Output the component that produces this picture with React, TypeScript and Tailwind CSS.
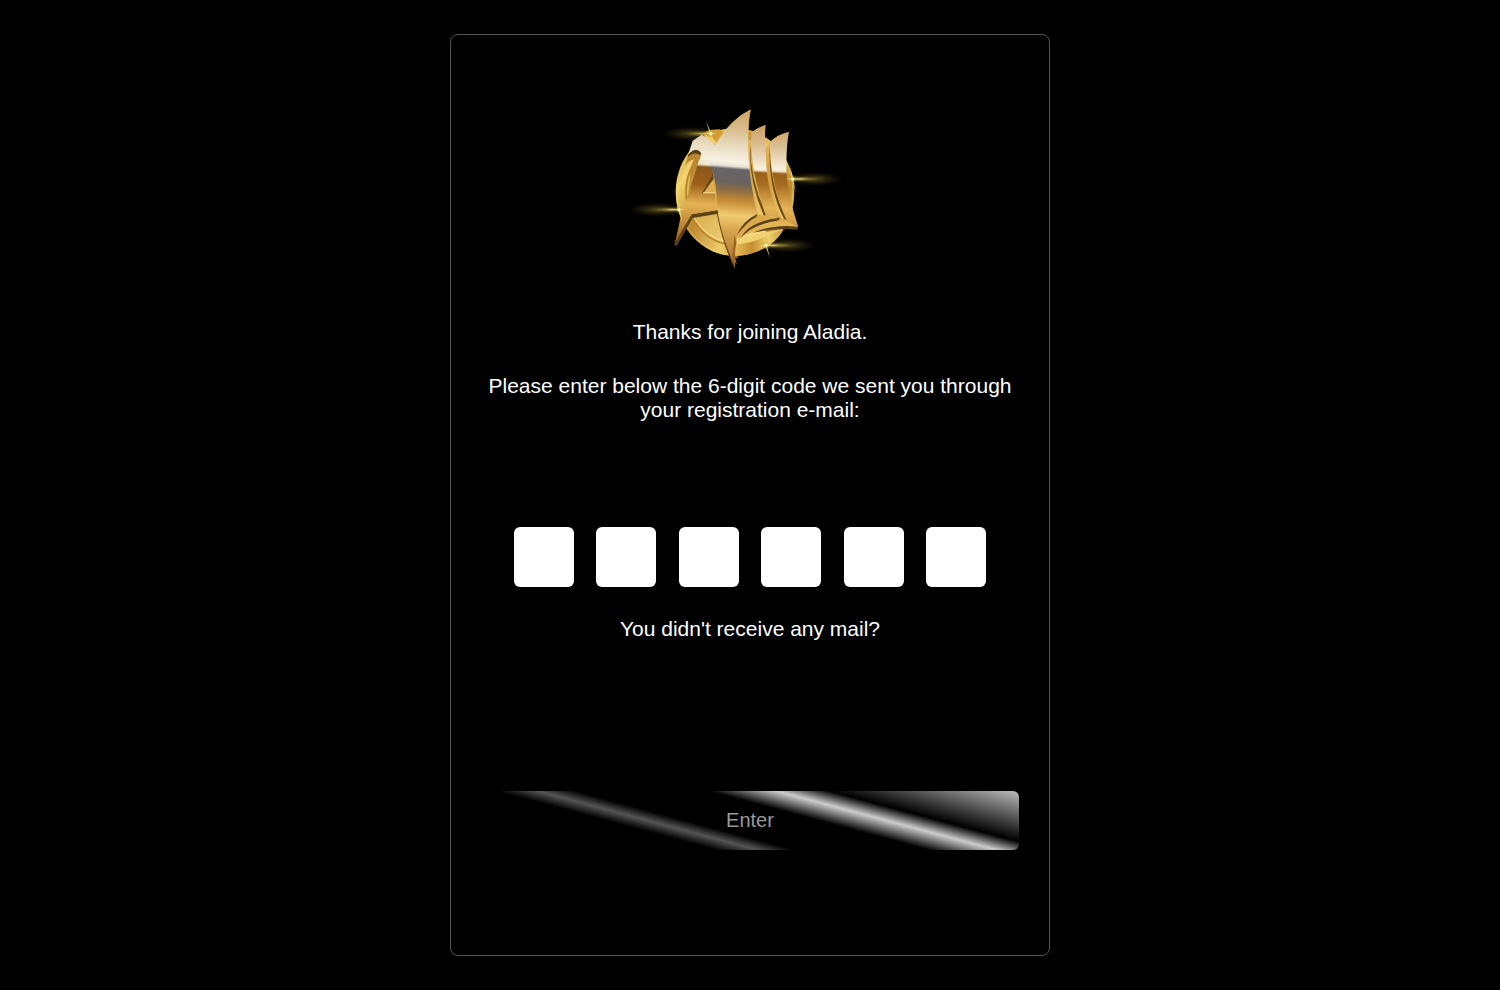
import React from "react";

function Flare({ x, y, left, right }: { x: number; y: number; left: number; right: number }) {
  return (
    <g>
      <ellipse cx={x + (right - left) / 2} cy={y} rx={(left + right) / 2} ry="22" fill="url(#glow)" />
      <ellipse cx={x + (right - left) / 6} cy={y} rx={(left + right) / 3.5} ry="9" fill="url(#glowCore)" />
    </g>
  );
}

function Spark({ x, y, lean }: { x: number; y: number; lean: number }) {
  return (
    <g transform={`translate(${x} ${y})`}>
      <path d="M-2.5 0L0 -40L2.5 0L0 40Z" fill="#efdc4a" opacity="0.9" transform={`rotate(${lean})`} />
      <path d="M-20 0L0 -2L20 0L0 2Z" fill="#fff2a8" />
      <circle r="14" fill="url(#glowCore)" />
      <circle r="3.8" fill="#fffdf0" />
    </g>
  );
}

function Logo() {
  return (
    <svg className="block h-[180px] w-[230px]" viewBox="0 0 690 540" role="img" aria-label="Aladia">
      <defs>
        <linearGradient id="metal" gradientUnits="userSpaceOnUse" x1="379" y1="30" x2="341" y2="505">
          <stop offset="0" stopColor="#d1a665" />
          <stop offset="0.12" stopColor="#d8bb8b" />
          <stop offset="0.22" stopColor="#e6d8bb" />
          <stop offset="0.33" stopColor="#f7f2e3" />
          <stop offset="0.36" stopColor="#e6e1d5" />
          <stop offset="0.378" stopColor="#666468" />
          <stop offset="0.46" stopColor="#69635f" />
          <stop offset="0.51" stopColor="#906d42" />
          <stop offset="0.575" stopColor="#c38b35" />
          <stop offset="0.67" stopColor="#f2cb70" />
          <stop offset="0.76" stopColor="#d8a54c" />
          <stop offset="0.9" stopColor="#b98236" />
          <stop offset="1" stopColor="#a76b22" />
        </linearGradient>
        <linearGradient id="bronze" gradientUnits="userSpaceOnUse" x1="430" y1="80" x2="412" y2="440">
          <stop offset="0" stopColor="#cca063" />
          <stop offset="0.16" stopColor="#dbc093" />
          <stop offset="0.35" stopColor="#f8f0dc" />
          <stop offset="0.365" stopColor="#eee1c7" />
          <stop offset="0.385" stopColor="#986019" />
          <stop offset="0.48" stopColor="#a86d22" />
          <stop offset="0.67" stopColor="#e5b456" />
          <stop offset="0.78" stopColor="#d5a04a" />
          <stop offset="1" stopColor="#a6732c" />
        </linearGradient>
        <linearGradient id="legGold" gradientUnits="userSpaceOnUse" x1="240" y1="110" x2="220" y2="430">
          <stop offset="0" stopColor="#dbc08e" />
          <stop offset="0.24" stopColor="#f1e2c1" />
          <stop offset="0.26" stopColor="#f1dfbc" />
          <stop offset="0.28" stopColor="#8c571a" />
          <stop offset="0.44" stopColor="#9b5f19" />
          <stop offset="0.63" stopColor="#e5b355" />
          <stop offset="0.8" stopColor="#c38c36" />
          <stop offset="1" stopColor="#9b631e" />
        </linearGradient>
        <linearGradient id="rim" x1="0" y1="0.2" x2="1" y2="0.8">
          <stop offset="0" stopColor="#c28d2f" />
          <stop offset="0.13" stopColor="#f3d56f" />
          <stop offset="0.35" stopColor="#bd872e" />
          <stop offset="0.6" stopColor="#edcb69" />
          <stop offset="0.83" stopColor="#bb862f" />
          <stop offset="1" stopColor="#ffec82" />
        </linearGradient>
        <linearGradient id="face" x1="0" y1="0" x2="0.8" y2="1">
          <stop offset="0" stopColor="#a87b29" />
          <stop offset="0.38" stopColor="#d5a640" />
          <stop offset="0.68" stopColor="#e6c267" />
          <stop offset="1" stopColor="#ffec96" />
        </linearGradient>
        <linearGradient id="edge" x1="0" y1="0" x2="0" y2="1">
          <stop offset="0" stopColor="#e2b45b" />
          <stop offset="0.5" stopColor="#d3a044" />
          <stop offset="1" stopColor="#efcb70" />
        </linearGradient>
        <linearGradient id="lowerRim" x1="0" y1="0" x2="1" y2="0">
          <stop offset="0" stopColor="#e6bd58" />
          <stop offset="0.35" stopColor="#c48e31" />
          <stop offset="0.7" stopColor="#efd06b" />
          <stop offset="1" stopColor="#c9973a" />
        </linearGradient>
        <radialGradient id="glow">
          <stop offset="0" stopColor="#ad963b" stopOpacity="0.55" />
          <stop offset="0.5" stopColor="#766324" stopOpacity="0.28" />
          <stop offset="1" stopColor="#3b300e" stopOpacity="0" />
        </radialGradient>
        <radialGradient id="glowCore">
          <stop offset="0" stopColor="#fff4ad" stopOpacity="0.9" />
          <stop offset="0.45" stopColor="#dcc34f" stopOpacity="0.4" />
          <stop offset="1" stopColor="#92772a" stopOpacity="0" />
        </radialGradient>
      </defs>

      <Flare x={272} y={101} left={150} right={45} />
      <Flare x={518} y={237} left={30} right={155} />
      <Flare x={177} y={329} left={155} right={30} />
      <Flare x={438} y={436} left={40} right={155} />

      <ellipse cx="345" cy="276" rx="178" ry="192" fill="url(#rim)" />
      <ellipse cx="345" cy="276" rx="174" ry="188" fill="none" stroke="#f8df83" strokeWidth="2" opacity="0.65" />
      <ellipse cx="344" cy="276" rx="146" ry="158" fill="url(#face)" stroke="#b6822a" strokeWidth="5" />
      <ellipse cx="345" cy="274" rx="142" ry="154" fill="none" stroke="#ffec9c" strokeWidth="2.5" opacity="0.7" />
      <path d="M246 101L285 134L312 101L300 88Q265 88 246 101Z" fill="#d19c36" />
      <path d="M250 103L285 134L291 128L276 112Z" fill="#f0cc68" />
      <path d="M386 121L438 125L450 129L453 168L430 150L388 135Z" fill="#e7c460" />
      <path d="M439 143L452 161V173L437 156Z" fill="#a87929" />

      <path d="M205 163Q228 137 246 156L238 192Q222 208 213 240Q204 212 222 178Q204 182 195 200Z" fill="#b98733" />
      <path d="M205 164Q228 136 246 156L240 166Q226 154 203 170Z" fill="#584014" />

      <path d="M215 343L292 331L295 341L218 354L170 438L163 434L165 422Z" fill="#5d4119" />
      <path d="M238 178L276 188L289 330L215 343L166 425L182 350Q203 290 238 178Z" fill="url(#legGold)" />
      <path d="M279 225L249 279L286 278Z" fill="#dcae50" />
      <path d="M279 221L246 279L251 278L281 236Z" fill="#684514" />
      <path d="M250 276L286 276V280L250 280Z" fill="#f5d27b" />

      <path d="M386 130L395 116Q388 235 440 346L413 350Q378 246 386 130Z" fill="url(#edge)" />
      <path d="M391 133Q389 241 440 345L432 349Q384 239 391 133Z" fill="#705018" />
      <path d="M394 99Q414 82 437 76Q433 113 437 159L443 212Q448 290 487 354L438 347Q393 224 394 120Z" fill="url(#bronze)" />
      <path d="M438 148L449 125Q449 251 501 362L484 355Q434 264 438 148Z" fill="url(#edge)" />
      <path d="M449 133Q449 263 502 359L495 363Q443 266 449 133Z" fill="#6c4b17" />
      <path d="M450 127Q474 103 507 97Q499 132 499 211Q504 290 535 382L501 363Q451 260 450 127Z" fill="url(#bronze)" />

      <path d="M245 104Q267 113 285 135Q333 57 391 30Q381 80 386 165Q391 250 413 342Q370 371 351 407L346 462L356 474L344 473L345 506Q304 407 291 314Q289 232 270 197L236 195L244 160Q228 137 205 163L218 122Z" fill="url(#metal)" />
      <path d="M245 158Q264 170 272 196L237 193Z" fill="#f6e9cb" opacity="0.7" />
      <path d="M291 329Q307 416 342 493L344 506Q310 441 290 340Z" fill="#654417" />
      <path d="M345 506L342 485L350 492L346 473L356 475L344 458L350 430L344 404L337 470Z" fill="#9a6424" />
      <path d="M285 135Q333 57 391 30Q381 80 386 165Q391 250 413 342" fill="none" stroke="#e9bd65" strokeWidth="2" />
      <path d="M394 99Q414 82 437 76M450 127Q474 103 507 97" fill="none" stroke="#e9bd65" strokeWidth="2" />

      <path d="M351 412Q369 367 413 343L494 357L535 381L493 388L409 392Q368 402 355 422Z" fill="#dba84b" />
      <path d="M350 408Q365 364 413 341L409 350Q377 367 350 408Z" fill="#574018" />
      <path d="M362 413Q388 364 481 353L476 361Q399 374 362 413Z" fill="#594018" />
      <path d="M371 407Q412 363 500 364L535 381L461 381Q405 387 371 407Z" fill="#e4b353" />
      <path d="M397 398Q444 379 501 378L535 380L532 389L493 387Q442 389 397 398Z" fill="#594019" />
      <path d="M353 414Q376 416 411 399L484 390Q461 420 401 431L348 438Z" fill="#f0d273" />
      <path d="M348 433Q407 430 455 399L491 389Q450 460 345 468Z" fill="url(#lowerRim)" />

      <Spark x={272} y={101} lean={-20} />
      <Spark x={518} y={237} lean={-12} />
      <Spark x={177} y={329} lean={-15} />
      <Spark x={438} y={436} lean={-17} />
    </svg>
  );
}

const slots = [0, 1, 2, 3, 4, 5];

export default function App() {
  return (
    <main className="flex h-[990px] justify-center bg-black pt-[34px] font-['Liberation_Sans',Arial,sans-serif] text-[21px] leading-6 text-white">
      <section className="flex h-[922px] w-[600px] flex-col items-center rounded-lg border border-[#555] px-[30px] pt-[65px]">
        <div className="-ml-[30px]">
          <Logo />
        </div>
        <p className="mt-10 text-center">Thanks for joining Aladia.</p>
        <p className="mt-[30px] text-center">
          Please enter below the 6-digit code we sent you through your registration e-mail:
        </p>
        <div className="mt-[105px] flex gap-[22.4px]">
          {slots.map((slot) => (
            <input
              key={slot}
              aria-label={`Digit ${slot + 1}`}
              maxLength={1}
              className="size-[60px] rounded-[6px] bg-white text-center text-black outline-none"
            />
          ))}
        </div>
        <p className="mt-[30px] text-center">You didn't receive any mail?</p>
        <button
          disabled
          className="mt-[150px] h-[59px] w-full rounded-[6px] bg-[linear-gradient(15deg,#000_31%,#555_36.5%,#000_41.5%,#000_59%,#ccc_68%,#000_75%,#bbb_100%)] pb-[2px] text-[20px] text-[#999]"
        >
          Enter
        </button>
      </section>
    </main>
  );
}
